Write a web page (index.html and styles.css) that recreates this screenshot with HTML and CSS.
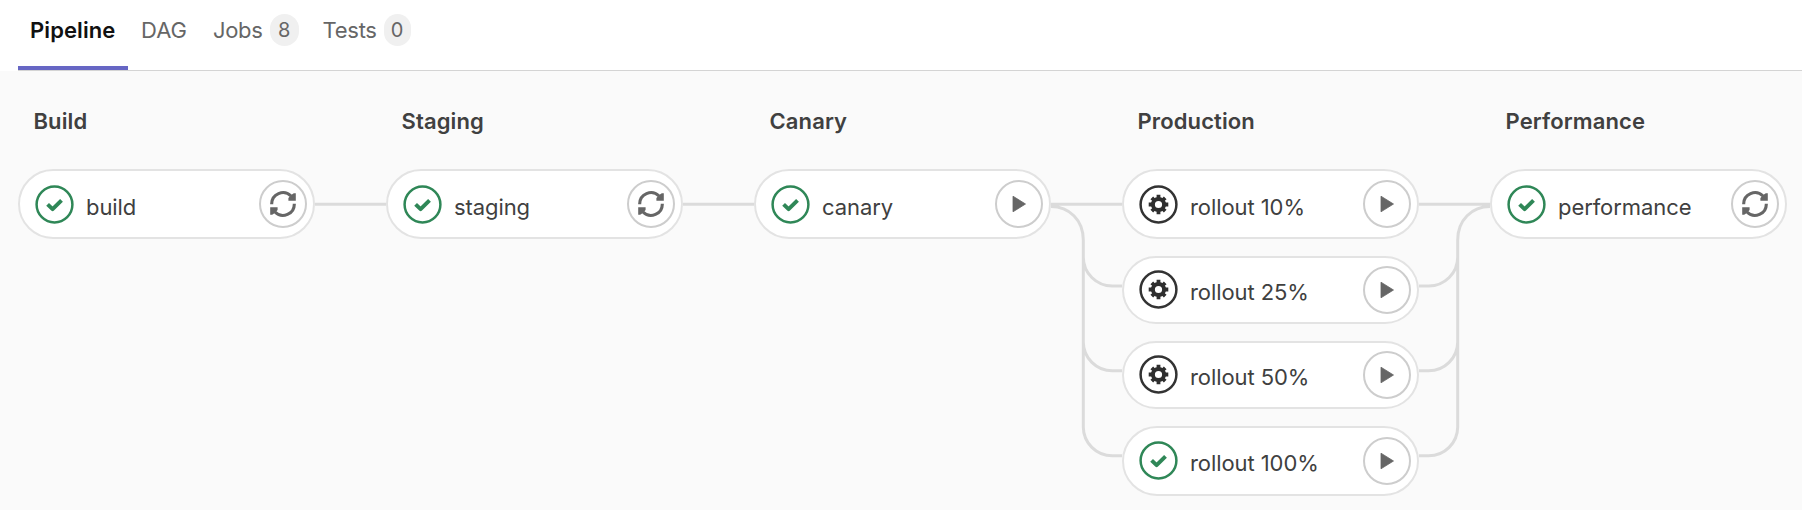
FILE: index.html
```html
<!DOCTYPE html>
<html lang="en">
<head>
<meta charset="utf-8">
<title>Pipeline</title>
<link rel="stylesheet" href="styles.css">
</head>
<body>
<svg class="sprite" aria-hidden="true">
  <symbol id="ok" viewBox="-19.5 -19.5 39 39">
    <circle r="17.9" fill="#fff" stroke="#2f8757" stroke-width="2.5"/>
    <path d="M-6.9 -0.1L-1.9 4.6L7 -4.1" fill="none" stroke="#2f8757" stroke-width="4" stroke-linejoin="round"/>
  </symbol>
  <symbol id="manual" viewBox="-19.5 -19.5 39 39">
    <circle r="17.9" fill="#fff" stroke="#333" stroke-width="2.5"/>
    <circle r="5.6" fill="none" stroke="#2e2e2e" stroke-width="4"/>
    <path d="M0 -9.8V-6M0 9.8V6M-9.8 0H-6M9.8 0H6M-6.7 -6.7L-4.5 -4.5M6.7 6.7L4.5 4.5M-6.7 6.7L-4.5 4.5M6.7 -6.7L4.5 -4.5" stroke="#2e2e2e" stroke-width="3.8"/>
  </symbol>
  <symbol id="retry" viewBox="-14 -14 28 28">
    <path d="M-11.3 0.3A11.3 11.3 0 0 1 8 -8M11.3 -0.3A11.3 11.3 0 0 1 -8 8" fill="none" stroke="#666" stroke-width="3.1"/>
    <path d="M12.8 -10.8V-3.3H5.4V-6L8.2 -9L10.8 -10.8ZM-12.8 10.8V3.3H-5.4V6L-8.2 9L-10.8 10.8Z" fill="#666"/>
  </symbol>
  <symbol id="play" viewBox="-14 -14 28 28">
    <path d="M-6 -7.8L6.5 0L-6 7.8Z" fill="#666" stroke="#666" stroke-width=".8" stroke-linejoin="round"/>
  </symbol>
</svg>

<nav class="tabs">
  <a class="tab active">Pipeline</a>
  <a class="tab dag">DAG</a>
  <a class="tab jobs">Jobs<span class="badge">8</span></a>
  <a class="tab tests">Tests<span class="badge narrow">0</span></a>
</nav>

<main class="graph">
  <section class="stage">
    <h2>Build</h2>
    <div class="job"><svg class="status"><use href="#ok"/></svg><span class="name">build</span><button class="action"><svg><use href="#retry"/></svg></button></div>
  </section>
  <svg class="link" viewBox="0 71 71 439"><path d="M0 204.2H71"/></svg>
  <section class="stage">
    <h2>Staging</h2>
    <div class="job"><svg class="status"><use href="#ok"/></svg><span class="name">staging</span><button class="action"><svg><use href="#retry"/></svg></button></div>
  </section>
  <svg class="link" viewBox="0 71 71 439"><path d="M0 204.2H71"/></svg>
  <section class="stage">
    <h2>Canary</h2>
    <div class="job"><svg class="status"><use href="#ok"/></svg><span class="name">canary</span><button class="action"><svg><use href="#play"/></svg></button></div>
  </section>
  <svg class="link" viewBox="0 71 71 439"><path d="M0 204.2H71M0 206.5C18 206.5 32.3 220 32.3 240V427A29 29 0 0 0 61.3 455.8H71M32.3 257A29 29 0 0 0 61.3 286H71M32.3 342A29 29 0 0 0 61.3 370.8H71"/></svg>
  <section class="stage">
    <h2>Production</h2>
    <div class="job"><svg class="status"><use href="#manual"/></svg><span class="name">rollout 10%</span><button class="action"><svg><use href="#play"/></svg></button></div>
    <div class="job short"><svg class="status"><use href="#manual"/></svg><span class="name">rollout 25%</span><button class="action"><svg><use href="#play"/></svg></button></div>
    <div class="job short"><svg class="status"><use href="#manual"/></svg><span class="name">rollout 50%</span><button class="action"><svg><use href="#play"/></svg></button></div>
    <div class="job"><svg class="status"><use href="#ok"/></svg><span class="name">rollout 100%</span><button class="action"><svg><use href="#play"/></svg></button></div>
  </section>
  <svg class="link" viewBox="0 71 71 439"><path d="M0 204.2H71M71 206.5C53 206.5 38.7 220 38.7 240V427A29 29 0 0 1 9.7 455.8H0M38.7 257A29 29 0 0 1 9.7 286H0M38.7 342A29 29 0 0 1 9.7 370.8H0"/></svg>
  <section class="stage">
    <h2>Performance</h2>
    <div class="job"><svg class="status"><use href="#ok"/></svg><span class="name">performance</span><button class="action"><svg><use href="#retry"/></svg></button></div>
  </section>
</main>
</body>
</html>
```

FILE: styles.css
```css
* { box-sizing: border-box; }

body {
  margin: 0;
  height: 510px;
  overflow: hidden;
  background: #fff;
  color: #404040;
  font-family: Inter, "Liberation Sans", sans-serif;
  font-size: 22px;
}

.sprite { display: none; }

.tabs {
  display: flex;
  height: 71px;
  margin-left: 18px;
  border-bottom: 1px solid #d4d4d4;
}

.tab {
  display: flex;
  align-items: center;
  height: 60px;
  color: #666;
  line-height: 60px;
}

.tab.active {
  width: 110px;
  height: 70px;
  padding: 0 0 6px 12px;
  border-bottom: 4px solid #6666c4;
  color: #111;
  font-weight: 600;
  letter-spacing: .1px;
}

.dag { margin-left: 13px; }
.jobs { margin-left: 26px; letter-spacing: -.3px; }
.tests { margin-left: 24px; letter-spacing: -.3px; }

.badge {
  width: 29px;
  height: 32px;
  margin-left: 7px;
  border-radius: 15px;
  background: #f0f0f0;
  font-size: 20px;
  line-height: 32px;
  letter-spacing: 0;
  text-align: center;
}

.badge.narrow { width: 27px; }

.graph {
  display: flex;
  height: 439px;
  padding-left: 18px;
  background: #fafafa;
}

.stage {
  display: flex;
  flex: none;
  flex-direction: column;
  gap: 17px;
  width: 297px;
}

.stage h2 {
  height: 81px;
  margin: 0;
  padding: 36px 0 0 15.5px;
  font-size: 22px;
  font-weight: 600;
  line-height: 28px;
  letter-spacing: .12px;
}

.job {
  display: flex;
  flex: none;
  align-items: center;
  height: 70px;
  padding: 0 6px 0 15px;
  border: 2px solid #e3e3e3;
  border-radius: 35px;
  background: #fff;
}

.job.short { height: 68px; }

.status {
  flex: none;
  width: 39px;
  height: 39px;
}

.job + .job .status { margin-bottom: 2px; }

.name {
  flex: 1;
  padding: 5px 0 0 12px;
  line-height: 28px;
  letter-spacing: -.08px;
  white-space: nowrap;
}

.job + .job .name { padding-top: 3px; }

.action {
  display: grid;
  place-items: center;
  width: 48px;
  height: 48px;
  padding: 0;
  border: 2px solid #cdcdcd;
  border-radius: 50%;
  background: #fff;
}

.action svg {
  width: 28px;
  height: 28px;
}

.link {
  flex: none;
  width: 71px;
  height: 439px;
}

.link path {
  fill: none;
  stroke: #dbdbdb;
  stroke-width: 3;
}
```
